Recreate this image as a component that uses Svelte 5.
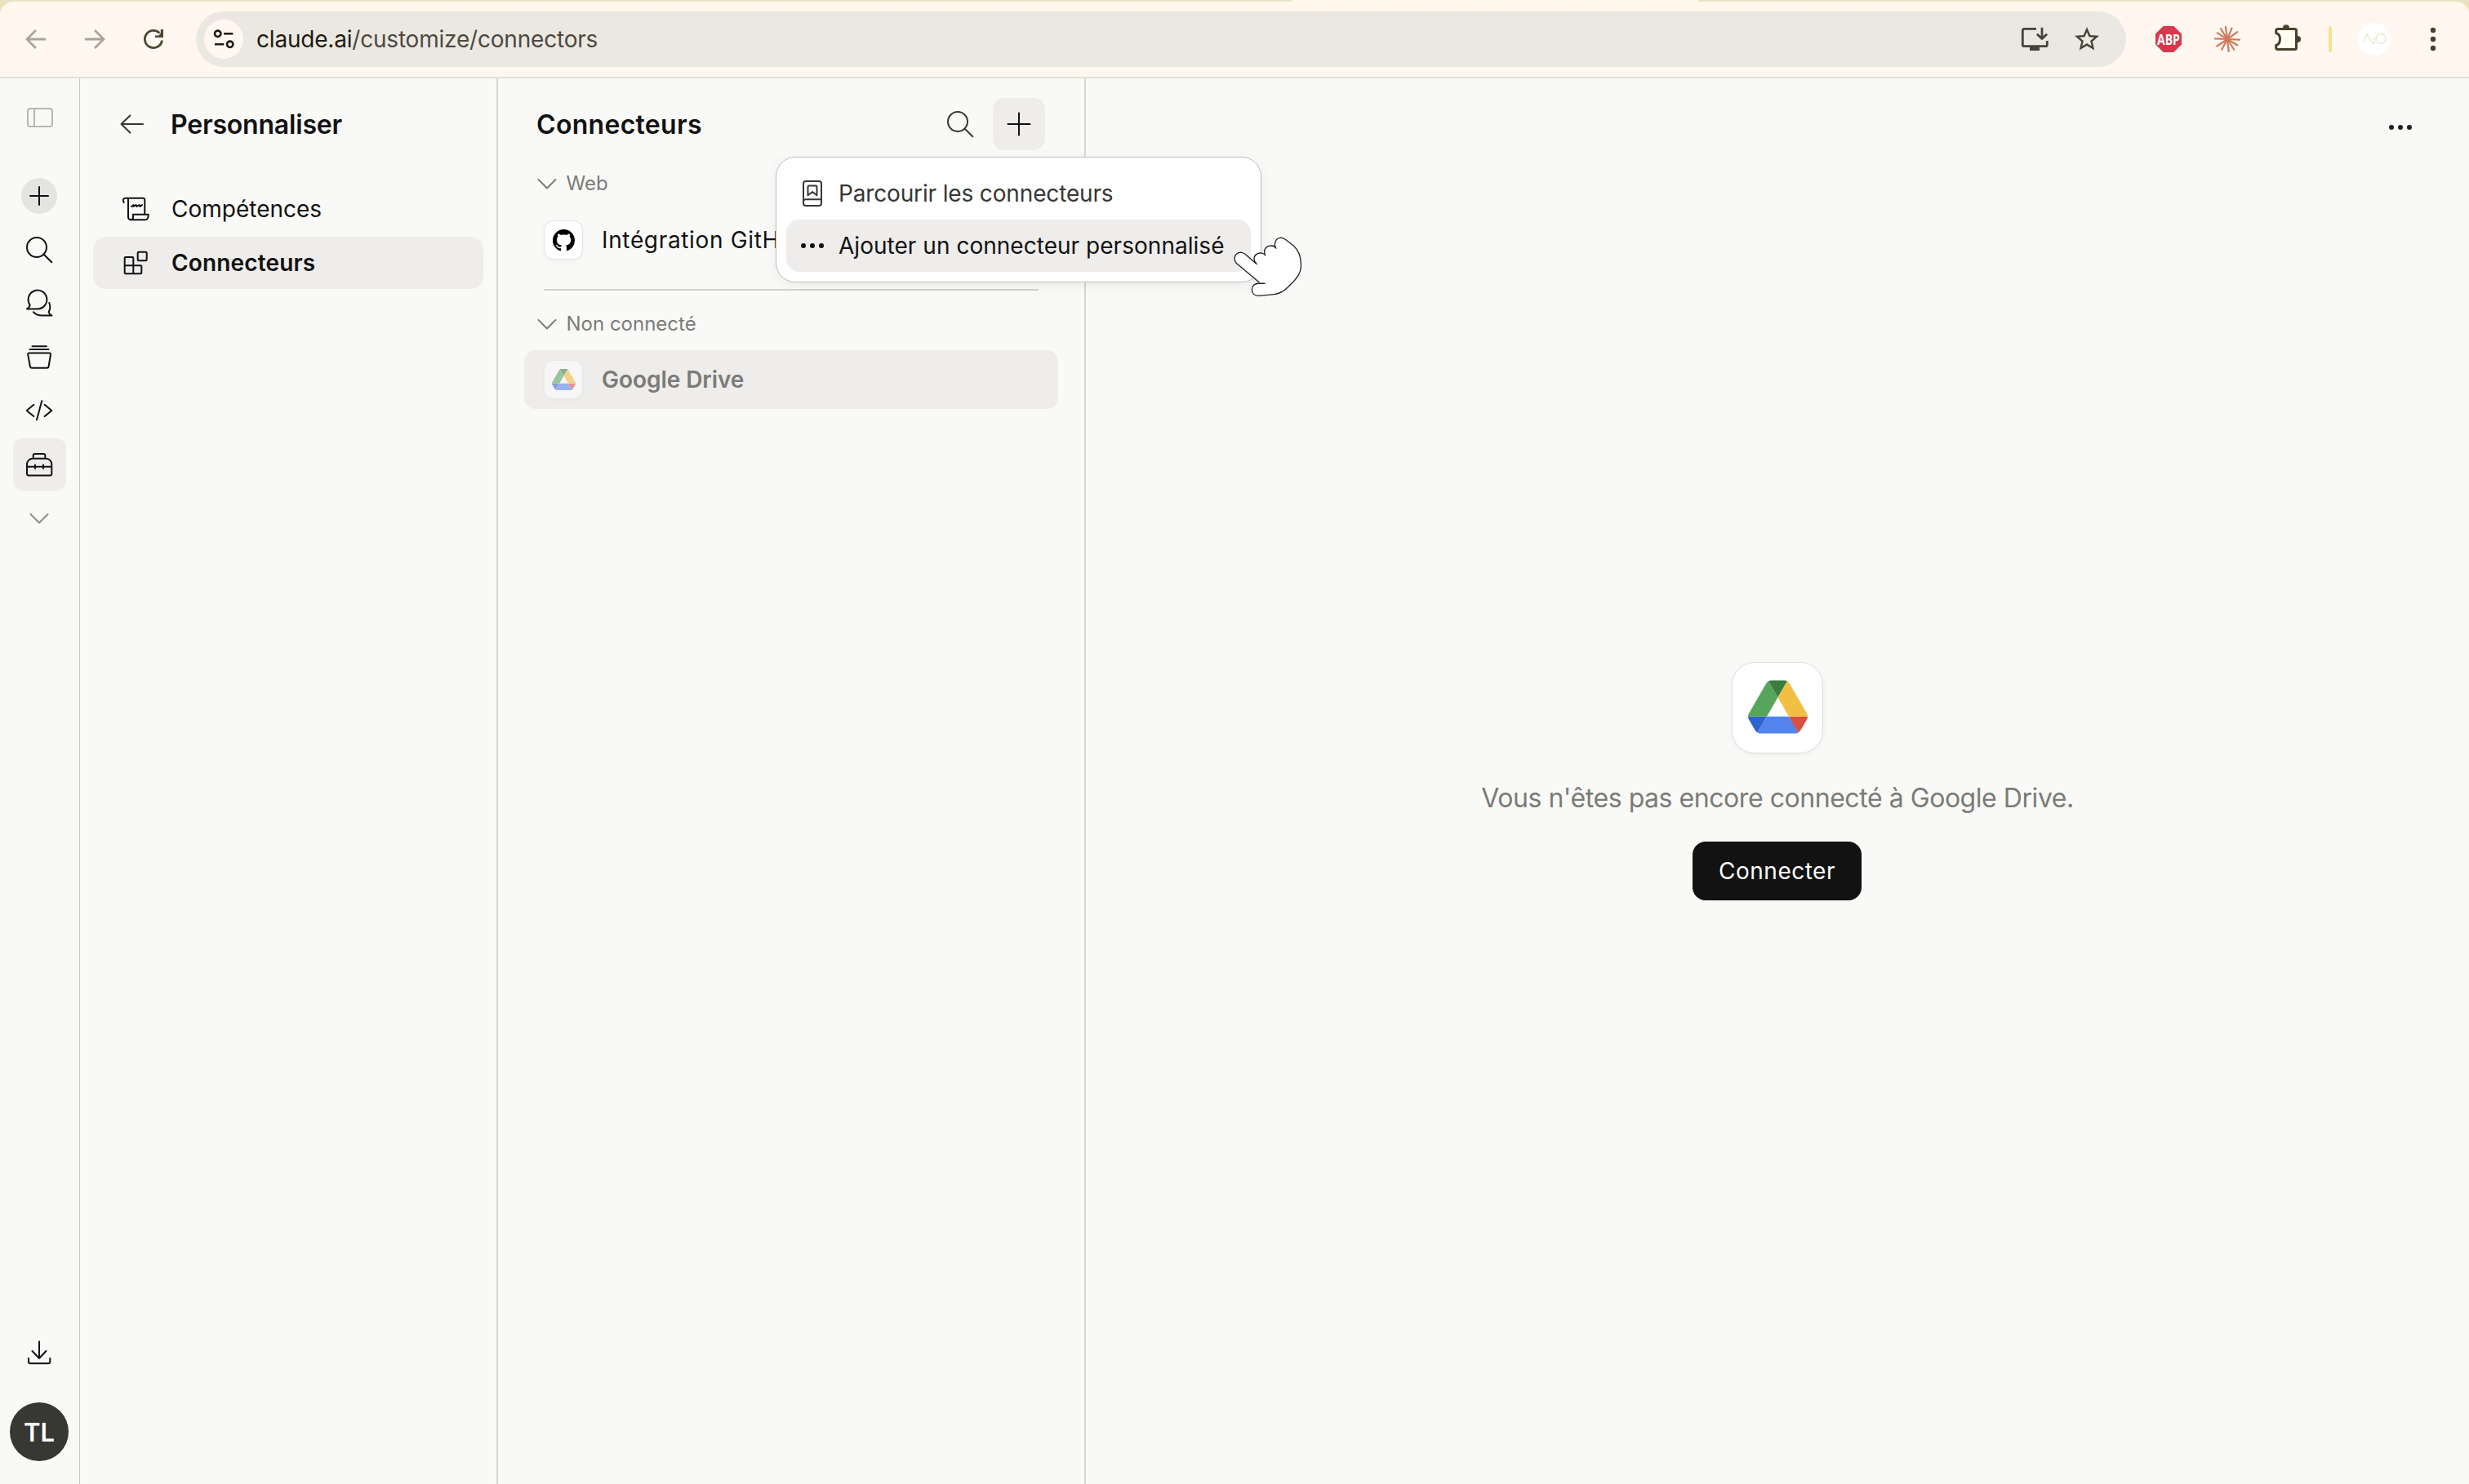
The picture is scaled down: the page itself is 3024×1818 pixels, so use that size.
<script>
  const icons = {
    panel: 'M8.500 9H33.500a2.500 2.500 0 0 1 2.500 2.500V28.500a2.500 2.500 0 0 1-2.500 2.500H8.500a2.500 2.500 0 0 1-2.500-2.500V11.500A2.500 2.500 0 0 1 8.500 9ZM14 9V31',
    plus: 'M20 9V31M9 20H31',
    plusLarge: 'M20 6.500V33.500M6.500 20H33.500',
    search: 'M29 17A12 12 0 1 1 5 17A12 12 0 1 1 29 17ZM25.700 25.700L35.300 35.300',
    chats: 'M18 26.400A11.400 11.400 0 1 0 8.600 21.400C8.600 23.500 7 25 5 26.400ZM32.300 19C33.800 23 33.600 27 31.600 30.400C32 32.500 33.500 33.500 35.500 34.600H24C19 34.600 15 33 12.800 30.200',
    projects: 'M11.500 6.300H29M8.500 10.100H31.500M8 14.600H32.500Q34.300 14.600 34 16.400L31.600 31Q31.300 32.800 29.500 32.800H11Q9.200 32.800 8.900 31L6.200 16.400Q6 14.600 8 14.600Z',
    code: 'M13.300 12.800L4.700 19.900L13.300 27.100M23.300 8.100L17 31.300M26.700 12.800L35.300 19.900L26.700 27.100',
    toolbox: 'M12 12.800H28.500A7 7 0 0 1 35.300 19.800V31.400A2 2 0 0 1 33.300 33.400H7A2 2 0 0 1 5 31.400V19.800A7 7 0 0 1 12 12.800ZM12.700 12.800V9A2 2 0 0 1 14.700 7H25.300A2 2 0 0 1 27.300 9V12.800M5 22.700H35.300M15 20.500V25M25 20.500V25',
    chevron: 'M9.500 15L20 25.500L30.500 15',
    download: 'M20 6.500V27M11.500 18L20 27L28.500 18M7 27V31.300A2 2 0 0 0 9 33.300H31.300A2 2 0 0 0 33.300 31.300V27',
    back: 'M33 20H6.500M17.300 9.500L6.500 20L17.300 30.500',
    skills: 'M5.700 12C4 9 5 6.700 8 6.700H29A2.300 2.300 0 0 1 31.300 9V26.700M11 6.700V30A3.300 3.300 0 0 0 14.300 33.300H32C34.500 33.300 35.700 30.500 35.700 26.700H17V30.500A2.800 2.800 0 0 1 14.300 33.300M15 17L17.500 15V17L20.500 15L21.500 17L24.500 15L25.500 17L28 15',
    blocks: 'M8 13H16A1.300 1.300 0 0 1 17.300 14.300V33.300H8A1.300 1.300 0 0 1 6.700 32V14.300A1.300 1.300 0 0 1 8 13ZM6.700 23.300H26A1.300 1.300 0 0 1 27.300 24.600V32A1.300 1.300 0 0 1 26 33.300H17M24 6.700H32.400A1.300 1.300 0 0 1 33.700 8V16A1.300 1.300 0 0 1 32.400 17.300H24A1.300 1.300 0 0 1 22.700 16V8A1.300 1.300 0 0 1 24 6.700Z',
    directory: 'M12 5H28A3 3 0 0 1 31 8V32A3 3 0 0 1 28 35H12A3 3 0 0 1 9 32V8A3 3 0 0 1 12 5ZM9 30A2.700 2.700 0 0 1 11.700 27.300H31M14.500 22.300V12A1.500 1.500 0 0 1 16 10.500H24A1.500 1.500 0 0 1 25.500 12V22.300L20 18Z'
  };

  const railItems = ['search', 'chats', 'projects', 'code', 'toolbox'];

  const navItems = [
    { label: 'Compétences', icon: 'skills', active: false },
    { label: 'Connecteurs', icon: 'blocks', active: true }
  ];

  const rays = [2, 31, 57, 84, 118, 146, 182, 212, 238, 262, 292, 324];
</script>

{#snippet icon(name, cls = '')}
  <svg class="icon {cls}" viewBox="0 0 40 40" aria-hidden="true"><path d={icons[name]} /></svg>
{/snippet}

{#snippet dots()}
  <svg class="icon dots" viewBox="0 0 40 40" aria-hidden="true">
    <circle cx="9" cy="20" r="3" /><circle cx="20" cy="20" r="3" /><circle cx="31" cy="20" r="3" />
  </svg>
{/snippet}

{#snippet drive()}
  <svg class="drive" viewBox="0 0 87.3 78" aria-hidden="true">
    <path fill="#2f64cd" d="m6.6 66.850 3.850 6.650c.8 1.400 1.950 2.500 3.300 3.300l13.750-23.800h-27.500c0 1.550.4 3.100 1.200 4.500z" />
    <path fill="#57a55a" d="m43.650 25-13.750-23.800c-1.350.8-2.500 1.900-3.300 3.300l-25.400 44a9.060 9.060 0 0 0 -1.200 4.500h27.500z" />
    <path fill="#d9503f" d="m73.550 76.800c1.350-.8 2.500-1.900 3.300-3.300l1.600-2.750 7.650-13.250c.8-1.400 1.200-2.950 1.200-4.500h-27.500l5.850 11.500z" />
    <path fill="#3b7d40" d="m43.650 25 13.750-23.800c-1.350-.8-2.900-1.200-4.500-1.200h-18.500c-1.600 0-3.150.45-4.500 1.200z" />
    <path fill="#5383ec" d="m59.800 53h-32.300l-13.750 23.800c1.350.8 2.900 1.200 4.500 1.200h50.800c1.600 0 3.150-.45 4.500-1.200z" />
    <path fill="#f3bf42" d="m73.400 26.500-12.700-22c-.8-1.400-1.950-2.500-3.300-3.300l-13.750 23.800 16.150 28h27.450c0-1.550-.4-3.100-1.200-4.500z" />
  </svg>
{/snippet}

<div class="window">
  <div class="tabs"><span class="active-tab"></span></div>
  <header class="toolbar">
    <svg class="icon nav-icon" viewBox="0 0 40 40"><path d="M32 20H9.500M20 9L9 20L20 31" /></svg>
    <svg class="icon nav-icon" viewBox="0 0 40 40"><path d="M8 20H30.500M20 9L31 20L20 31" /></svg>
    <svg class="icon reload" viewBox="0 0 40 40">
      <path d="M30.500 21.500A10.600 10.600 0 1 1 27.500 12.500" />
      <path class="head" d="M32 8V18H22V15.500H26.500L28.800 12.500V8Z" />
    </svg>
    <div class="omnibox">
      <span class="site-info">
        <svg class="icon" viewBox="0 0 40 40">
          <circle cx="12.700" cy="13.300" r="3.700" /><path d="M20 13.300H31.300M9 26.300H20.300" />
          <circle cx="27.700" cy="26.300" r="3.700" />
        </svg>
      </span>
      <span class="url">claude.ai<span class="path">/customize/connectors</span></span>
      <svg class="icon install" viewBox="0 0 40 40">
        <path d="M22 7.300H7.300A2 2 0 0 0 5.300 9.300V26.700A2 2 0 0 0 7.300 28.700H33.300A2 2 0 0 0 35.300 26.700V22M29 5.700V19M22.900 13.700L29 19.600L35.100 13.700" />
        <path class="solid" d="M14 28H26V34H14Z" />
      </svg>
      <svg class="star" viewBox="0 0 24 24">
        <path d="M22 9.240l-7.190-.62L12 2 9.190 8.630 2 9.240l5.460 4.730L5.820 21 12 17.270 18.180 21l-1.630-7.030L22 9.240zM12 15.400l-3.760 2.270 1-4.280-3.320-2.880 4.380-.38L12 6.100l1.710 4.040 4.380.38-3.320 2.880 1 4.280L12 15.400z" />
      </svg>
    </div>
    <span class="abp"><span>ABP</span></span>
    <svg class="spark" viewBox="0 0 32 32">
      {#each rays as angle, i}
        <path d="M16 16H{i % 3 === 1 ? 30.5 : 31.2}" transform="rotate({angle} 16 16)" />
      {/each}
    </svg>
    <svg class="icon puzzle" viewBox="0 0 40 40">
      <circle cx="18" cy="6.200" r="4" /><circle cx="32" cy="20" r="4" />
      <path d="M5.700 12.500V9.500A2 2 0 0 1 7.700 7.500H28.500A2 2 0 0 1 30.500 9.500V30.500A2 2 0 0 1 28.500 32.500H7.700A2 2 0 0 1 5.700 30.500V27.500C9 26.500 10.500 23.500 10.500 20S9 13.500 5.700 12.500Z" />
    </svg>
    <span class="separator"></span>
    <svg class="profile" viewBox="0 0 40 40">
      <circle cx="20" cy="20" r="20" />
      <path d="M6 23L11 14L17 24L20 25V18M34 19.500A6 6 0 1 1 22 19.500A6 6 0 1 1 34 19.500" />
    </svg>
    <svg class="icon kebab" viewBox="0 0 40 40">
      <circle cx="20" cy="9" r="3.200" /><circle cx="20" cy="20" r="3.200" /><circle cx="20" cy="31" r="3.200" />
    </svg>
  </header>

  <div class="app">
    <aside class="rail">
      <button class="rail-btn toggle" aria-label="Menu">{@render icon('panel', 'faint')}</button>
      <button class="rail-btn" aria-label="Nouveau"><span class="new">{@render icon('plus')}</span></button>
      {#each railItems as name}
        <button class="rail-btn" class:active={name === 'toolbox'} aria-label={name}>{@render icon(name)}</button>
      {/each}
      <button class="rail-btn" aria-label="Plus">{@render icon('chevron', 'muted')}</button>
      <button class="rail-btn bottom" aria-label="Télécharger">{@render icon('download')}</button>
      <div class="avatar">TL</div>
    </aside>

    <nav class="customize">
      <div class="head">
        {@render icon('back', 'soft')}
        <h1>Personnaliser</h1>
      </div>
      {#each navItems as item}
        <div class="nav-item" class:active={item.active}>
          {@render icon(item.icon)}
          <span>{item.label}</span>
        </div>
      {/each}
    </nav>

    <section class="connectors">
      <div class="head">
        <h2>Connecteurs</h2>
        <button class="square" aria-label="Rechercher">{@render icon('search', 'soft')}</button>
        <div class="add">
          <button class="square active" aria-label="Ajouter">{@render icon('plusLarge')}</button>
          <div class="menu">
            <div class="menu-item">{@render icon('directory')}<span>Parcourir les connecteurs</span></div>
            <div class="menu-item active">{@render dots()}<span>Ajouter un connecteur personnalisé</span></div>
            <svg class="cursor" viewBox="90 55 260 230">
              <path d="M187 228L103 158C90 143 97 120 118 118C126 118 132 122 140 129L177 161C163 148 166 130 178 124C190 118 203 121 209 129C202 115 206 99 222 95C233 92 243 95 248 103C239 90 245 68 262 65C270 63 277 67 284 72L312 94C335 115 341 140 339 172C338 195 325 210 312 225L290 247C275 262 262 270 240 272L185 277C168 278 160 268 160 255C160 240 170 231 187 232H208" />
            </svg>
          </div>
        </div>
      </div>

      <div class="group">{@render icon('chevron')}<span>Web</span></div>
      <div class="row">
        <span class="logo">
          <svg class="github" viewBox="0 0 16 16">
            <path d="M8 0C3.580 0 0 3.580 0 8c0 3.540 2.290 6.530 5.470 7.590.4.070.55-.17.55-.38 0-.19-.01-.82-.01-1.490-2.010.37-2.530-.49-2.690-.94-.09-.23-.48-.94-.82-1.130-.28-.15-.68-.52-.01-.53.63-.01 1.080.58 1.230.82.72 1.210 1.870.87 2.330.66.070-.52.28-.87.51-1.070-1.780-.2-3.640-.89-3.640-3.950 0-.87.31-1.590.82-2.150-.08-.2-.36-1.020.08-2.120 0 0 .67-.21 2.200.82.64-.18 1.320-.27 2-.27s1.360.09 2 .27c1.530-1.040 2.200-.82 2.200-.82.44 1.100.16 1.920.08 2.120.51.56.82 1.270.82 2.150 0 3.070-1.870 3.750-3.650 3.950.29.25.54.73.54 1.480 0 1.070-.01 1.930-.01 2.200 0 .21.15.46.55.38A8.010 8.010 0 0 0 16 8c0-4.420-3.580-8-8-8z" />
          </svg>
        </span>
        <span class="github-name">Intégration GitHub</span>
      </div>
      <hr />
      <div class="group">{@render icon('chevron')}<span>Non connecté</span></div>
      <div class="row selected">
        <span class="logo">{@render drive()}</span>
        <span>Google Drive</span>
      </div>
    </section>

    <main class="detail">
      <div class="more">{@render dots()}</div>
      <div class="empty">
        <div class="logo-large">{@render drive()}</div>
        <p>Vous n'êtes pas encore connecté à Google Drive.</p>
        <button class="connect">Connecter</button>
      </div>
    </main>
  </div>
</div>

<style>
  :global(body) {
    background: #f9f9f7;
  }
  .window {
    display: flex;
    flex-direction: column;
    width: 3024px;
    height: 1818px;
    overflow: hidden;
    font-family: Inter, 'Liberation Sans', sans-serif;
    font-size: 28px;
    line-height: 40px;
    color: #121212;
    background: linear-gradient(#ece2bd 0 40px, #f9f9f7 40px);
  }
  button {
    padding: 0;
    border: 0;
    background: none;
    font: inherit;
    color: inherit;
  }
  .icon {
    flex: none;
    width: 40px;
    height: 40px;
    fill: none;
    stroke: currentColor;
    stroke-width: 2;
    stroke-linecap: round;
    stroke-linejoin: round;
  }
  .dots,
  .kebab {
    fill: currentColor;
    stroke: none;
  }
  .faint {
    color: #b7b7b5;
  }
  .muted {
    color: #8b8b88;
  }
  .soft {
    color: #373734;
  }

  /* browser chrome */
  .tabs {
    flex: none;
    display: flex;
    height: 2px;
    background: #ebe2c6;
  }
  .active-tab {
    width: 498px;
    margin-left: 1582px;
    background: #fff7ef;
  }
  .toolbar {
    flex: none;
    display: flex;
    align-items: center;
    box-sizing: border-box;
    height: 94px;
    padding: 0 24px;
    border-bottom: 2px solid #e6e2d0;
    border-radius: 16px 16px 0 0;
    background: linear-gradient(#fff8ec, #fff7f0 30%, #fff7f0);
  }
  .nav-icon {
    margin-right: 32px;
    color: #a9a59e;
    stroke-width: 2.8;
    stroke-linecap: butt;
    stroke-linejoin: miter;
  }
  .reload {
    margin-right: 32px;
    color: #4b462d;
    stroke-width: 2.8;
    stroke-linecap: butt;
  }
  .reload .head {
    fill: currentColor;
    stroke: none;
  }
  .omnibox {
    display: flex;
    align-items: center;
    box-sizing: border-box;
    width: 2364px;
    height: 68px;
    margin-right: 36px;
    padding: 0 30px 0 10px;
    border-radius: 34px;
    background: #ebe8e2;
  }
  .site-info {
    display: flex;
    align-items: center;
    justify-content: center;
    width: 48px;
    height: 48px;
    border-radius: 50%;
    background: #fff7f0;
  }
  .site-info .icon {
    color: #1f1b10;
    stroke-width: 2.6;
    stroke-linecap: butt;
  }
  .url {
    flex: 1;
    margin-left: 16px;
    font-size: 28px;
    letter-spacing: -0.2px;
    color: #1f1b12;
  }
  .path {
    color: #4d493f;
  }
  .install {
    margin-right: 26px;
    color: #46433a;
    stroke-width: 2.8;
    stroke-linecap: butt;
  }
  .solid {
    fill: currentColor;
    stroke: none;
  }
  .star {
    width: 36px;
    height: 36px;
    fill: #46433a;
  }
  .abp {
    display: flex;
    align-items: center;
    justify-content: center;
    flex: none;
    width: 32px;
    height: 32px;
    margin-right: 40px;
    background: #d9374b;
    clip-path: polygon(30% 0, 70% 0, 100% 30%, 100% 70%, 70% 100%, 30% 100%, 0 70%, 0 30%);
    color: #fff;
    font: 700 18px/24px 'Open Sans', sans-serif;
  }
  .abp span {
    transform: scaleX(0.78);
  }
  .spark {
    flex: none;
    width: 32px;
    height: 32px;
    margin-right: 40px;
    stroke: #d07a5c;
    stroke-width: 2.2;
    stroke-linecap: round;
  }
  .puzzle {
    margin-left: -2px;
    margin-right: 30px;
    color: #46432c;
    fill: #fffdf0;
    stroke-width: 3;
  }
  .puzzle circle {
    fill: currentColor;
    stroke: none;
  }
  .separator {
    width: 4px;
    height: 32px;
    margin-right: 32px;
    border-radius: 2px;
    background: #f8e08e;
  }
  .profile {
    width: 40px;
    height: 40px;
    margin-right: 32px;
    fill: #fff;
  }
  .profile path {
    fill: none;
    stroke: #ebe9cc;
    stroke-width: 1.5;
  }
  .kebab {
    color: #46432c;
  }

  /* app */
  .app {
    flex: 1;
    display: flex;
    min-height: 0;
    background: #f9f9f7;
  }
  .rail {
    flex: none;
    display: flex;
    flex-direction: column;
    align-items: center;
    gap: 1.9px;
    box-sizing: border-box;
    width: 98px;
    padding: 16px 1px 28px 0;
    border-right: 1px solid #c9c9c7;
  }
  .rail-btn {
    display: flex;
    align-items: center;
    justify-content: center;
    width: 65px;
    height: 64px;
    border-radius: 12px;
  }
  .toggle {
    margin-bottom: 30px;
  }
  .new {
    display: flex;
    align-items: center;
    justify-content: center;
    width: 44px;
    height: 44px;
    border-radius: 50%;
    background: #e4e4e2;
  }
  .active {
    background: #eeedeb;
  }
  .bottom {
    margin-top: auto;
    margin-bottom: 27px;
  }
  .avatar {
    width: 72px;
    height: 72px;
    border-radius: 50%;
    background: #373734;
    color: #fff;
    font-size: 31px;
    font-weight: 600;
    line-height: 73px;
    text-align: center;
  }

  .customize {
    flex: none;
    box-sizing: border-box;
    width: 512px;
    padding: 24px 16px 0;
    border-right: 2px solid #d6d6d4;
  }
  .head {
    display: flex;
    align-items: center;
    height: 64px;
  }
  h1,
  h2 {
    margin: 0;
    padding-top: 2px;
    font-size: 32px;
    font-weight: 600;
  }
  .customize .head {
    gap: 27px;
    margin-bottom: 40px;
    padding-left: 28px;
  }
  h1 {
    letter-spacing: -0.2px;
  }
  .nav-item {
    display: flex;
    align-items: center;
    gap: 24px;
    height: 64px;
    margin-bottom: 2px;
    padding-left: 32px;
    border-radius: 16px;
  }
  .nav-item.active {
    font-weight: 600;
    letter-spacing: 0.15px;
  }

  .connectors {
    flex: none;
    box-sizing: border-box;
    width: 720px;
    padding: 24px 32px 0;
    border-right: 2px solid #d6d6d4;
  }
  .connectors .head {
    gap: 8px;
    padding: 0 16px 0 15px;
  }
  h2 {
    flex: 1;
    letter-spacing: 0.3px;
  }
  .square {
    display: flex;
    align-items: center;
    justify-content: center;
    width: 64px;
    height: 64px;
    border-radius: 14px;
  }
  .add {
    position: relative;
  }
  .menu {
    position: absolute;
    top: 72px;
    left: -266px;
    z-index: 1;
    box-sizing: border-box;
    width: 595px;
    padding: 12px;
    border: 1px solid #bfbfbd;
    border-radius: 24px;
    background: #fff;
    box-shadow: 0 4px 16px rgba(0, 0, 0, 0.06);
  }
  .menu-item {
    display: flex;
    align-items: center;
    gap: 12px;
    height: 64px;
    padding-left: 12px;
    border-radius: 16px;
    color: #373734;
    letter-spacing: -0.15px;
    white-space: nowrap;
  }
  .menu-item.active {
    color: #121212;
    letter-spacing: 0.03px;
  }
  .cursor {
    position: absolute;
    top: 95px;
    left: 559px;
    width: 87px;
    height: 77px;
    fill: #fff;
    stroke: #222;
    stroke-width: 4;
    stroke-linejoin: round;
  }
  .group {
    display: flex;
    align-items: center;
    gap: 3.5px;
    height: 40px;
    margin-top: 21px;
    padding-left: 8px;
    font-size: 24px;
    color: #7b7b78;
  }
  .row {
    display: flex;
    align-items: center;
    gap: 23px;
    height: 72px;
    margin-top: 13px;
    padding-left: 24px;
    border-radius: 14px;
    white-space: nowrap;
  }
  .github-name {
    letter-spacing: 0.65px;
  }
  .logo {
    display: flex;
    align-items: center;
    justify-content: center;
    box-sizing: border-box;
    width: 48px;
    height: 48px;
    border: 1px solid #e4e4e2;
    border-radius: 12px;
    background: #fff;
    box-shadow: 0 2px 4px rgba(0, 0, 0, 0.04);
  }
  .github {
    width: 27px;
    height: 27px;
  }
  hr {
    height: 2px;
    margin: 24px 24px 0;
    border: 0;
    background: #d3d3d1;
  }
  .row.selected {
    margin-top: 12px;
    background: #eeedeb;
    font-weight: 600;
    letter-spacing: -0.05px;
    color: #7b7b78;
  }
  .selected .logo {
    opacity: 0.55;
  }
  .logo .drive {
    width: 29px;
    height: 26px;
  }

  .detail {
    flex: 1;
    display: flex;
    flex-direction: column;
  }
  .more {
    display: flex;
    justify-content: flex-end;
    height: 0;
    padding: 40px 64px 0 0;
  }
  .more .icon {
    color: #222;
  }
  .empty {
    flex: 1;
    display: flex;
    flex-direction: column;
    align-items: center;
    justify-content: center;
    margin-top: -40px;
  }
  .logo-large {
    display: flex;
    align-items: center;
    justify-content: center;
    box-sizing: border-box;
    width: 112px;
    height: 112px;
    padding-bottom: 2px;
    border: 1px solid #e0e0de;
    border-radius: 28px;
    background: #fff;
    box-shadow: 0 2px 6px rgba(0, 0, 0, 0.05);
  }
  .logo-large .drive {
    width: 73px;
    height: 66px;
  }
  p {
    margin: 35px 0 33px;
    font-size: 32px;
    letter-spacing: -0.45px;
    color: #7b7b78;
  }
  .connect {
    width: 207px;
    height: 72px;
    margin-right: 1px;
    border-radius: 16px;
    background: #121212;
    color: #fff;
    letter-spacing: 0.5px;
  }
</style>
